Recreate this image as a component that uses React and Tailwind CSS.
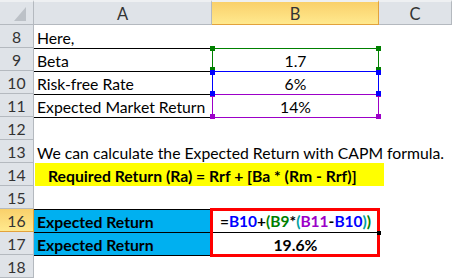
import React from "react";

const headCell = "bg-[#dfe3e8] border-r border-b border-[#b4b9bf] flex items-center justify-center text-[#333] pt-[2px]";
const selHead = "bg-gradient-to-b from-[#f9d06a] to-[#ffe98e] border-r border-b border-[#e2a23c] flex items-center justify-center text-[#333] pt-[2px]";

function RowHead({ n, sel }) {
  return <div className={sel ? selHead : headCell}>{n}</div>;
}

export default function App() {
  return (
    <div className="relative w-[452px] h-[278px] overflow-hidden bg-white font-[Lato,sans-serif] text-[15.75px] text-black">
      <div className="grid grid-cols-[34px_178px_167px_73px] grid-rows-[25px_repeat(11,23px)]">
        {/* column headers */}
        <div className="bg-[#dfe3e8] border-r border-b border-t-2 border-t-[#eef0f2] border-[#b4b9bf] relative">
          <div className="absolute right-[7px] bottom-[3px] w-0 h-0 border-l-[12px] border-l-transparent border-b-[14px] border-b-[#bcc1c7]" />
        </div>
        <div className={headCell + " border-t-2 border-t-[#eef0f2] text-[16.5px]"}>A</div>
        <div className={selHead + " border-t-2 border-t-[#eef0f2] text-[16.5px]"}>B</div>
        <div className={headCell + " border-t-2 border-t-[#eef0f2] text-[16.5px]"}>C</div>

        {/* 8 */}
        <RowHead n="8" />
        <div className="flex items-center pl-[3px] pt-[2px]">Here,</div>
        <div />
        <div />

        {/* 9 */}
        <RowHead n="9" />
        <div className="flex items-center pl-[3px] pt-[2px] border-t border-black">Beta</div>
        <div className="flex items-center justify-center pt-[2px] border-t border-x border-[#008000]">1.7</div>
        <div />

        {/* 10 */}
        <RowHead n="10" />
        <div className="flex items-center pl-[3px] pt-[2px] border-t border-black">Risk-free Rate</div>
        <div className="flex items-center justify-center pt-[2px] border-t border-x border-[#0000ff]">6%</div>
        <div />

        {/* 11 */}
        <RowHead n="11" />
        <div className="flex items-center pl-[3px] pt-[2px] border-t border-black whitespace-nowrap">Expected Market Return</div>
        <div className="flex items-center justify-center pt-[2px] border-t border-x border-[#9c00c8]">14%</div>
        <div />

        {/* 12 */}
        <RowHead n="12" />
        <div className="border-t border-black" />
        <div className="border-t border-[#9c00c8]" />
        <div />

        {/* 13 */}
        <RowHead n="13" />
        <div className="col-span-3 flex items-center pl-[3px] pt-[2px] whitespace-nowrap">
          We can calculate the Expected Return with CAPM formula.
        </div>

        {/* 14 */}
        <RowHead n="14" />
        <div className="col-span-3 flex">
          <div className="ml-[1px] w-[349px] bg-[#ffff00] flex items-center pl-[13px] pt-[2px] font-bold whitespace-nowrap">
            Required Return (Ra) = Rrf + [Ba * (Rm - Rrf)]
          </div>
        </div>

        {/* 15 */}
        <RowHead n="15" />
        <div />
        <div />
        <div />

        {/* 16 */}
        <RowHead n="16" sel />
        <div className="flex items-center pl-[3px] pt-[2px] border-t border-black bg-[#00b0f0] font-bold">Expected Return</div>
        <div className="flex items-center justify-center pt-[2px] border-t border-black font-bold whitespace-nowrap text-[15.5px]">
          <span>=</span>
          <span className="text-[#0000ff]">B10</span>
          <span>+</span>
          <span className="text-[#008000]">(</span>
          <span className="text-[#008000]">B9</span>
          <span>*</span>
          <span className="text-[#00a0a0]">(</span>
          <span className="text-[#9c00c8]">B11</span>
          <span>-</span>
          <span className="text-[#0000ff]">B10</span>
          <span className="text-[#00a0a0]">)</span>
          <span className="text-[#008000]">)</span>
        </div>
        <div />

        {/* 17 */}
        <RowHead n="17" />
        <div className="flex items-center pl-[3px] pt-[2px] border-t border-black bg-[#00b0f0] font-bold">Expected Return</div>
        <div className="flex items-center justify-center pt-[2px] border-t border-black font-bold">19.6%</div>
        <div />

        {/* 18 */}
        <RowHead n="18" />
        <div className="border-t border-black" />
        <div />
        <div />
      </div>

      {/* range handles */}
      <div className="absolute left-[210px] top-[46px] w-[5px] h-[5px] bg-[#008000]" />
      <div className="absolute left-[376px] top-[46px] w-[5px] h-[5px] bg-[#008000]" />
      <div className="absolute left-[210px] top-[67px] w-[5px] h-[5px] bg-[#008000]" />
      <div className="absolute left-[376px] top-[67px] w-[5px] h-[5px] bg-[#008000]" />
      <div className="absolute left-[210px] top-[92px] w-[5px] h-[5px] bg-[#9c00c8]" />
      <div className="absolute left-[376px] top-[92px] w-[5px] h-[5px] bg-[#9c00c8]" />
      <div className="absolute left-[210px] top-[114px] w-[5px] h-[5px] bg-[#9c00c8]" />
      <div className="absolute left-[376px] top-[114px] w-[5px] h-[5px] bg-[#9c00c8]" />
      <div className="absolute left-[210px] top-[70px] w-[5px] h-[5px] bg-[#0000ff]" />
      <div className="absolute left-[376px] top-[70px] w-[5px] h-[5px] bg-[#0000ff]" />
      <div className="absolute left-[210px] top-[91px] w-[5px] h-[5px] bg-[#0000ff]" />
      <div className="absolute left-[376px] top-[91px] w-[5px] h-[5px] bg-[#0000ff]" />

      {/* selection */}
      <div className="absolute left-[210px] top-[208px] w-[170px] h-[49px] border-[3px] border-[#ff0000]" />
      <div className="absolute left-[377px] top-[231px] w-[4px] h-[4px] bg-black" />
    </div>
  );
}
